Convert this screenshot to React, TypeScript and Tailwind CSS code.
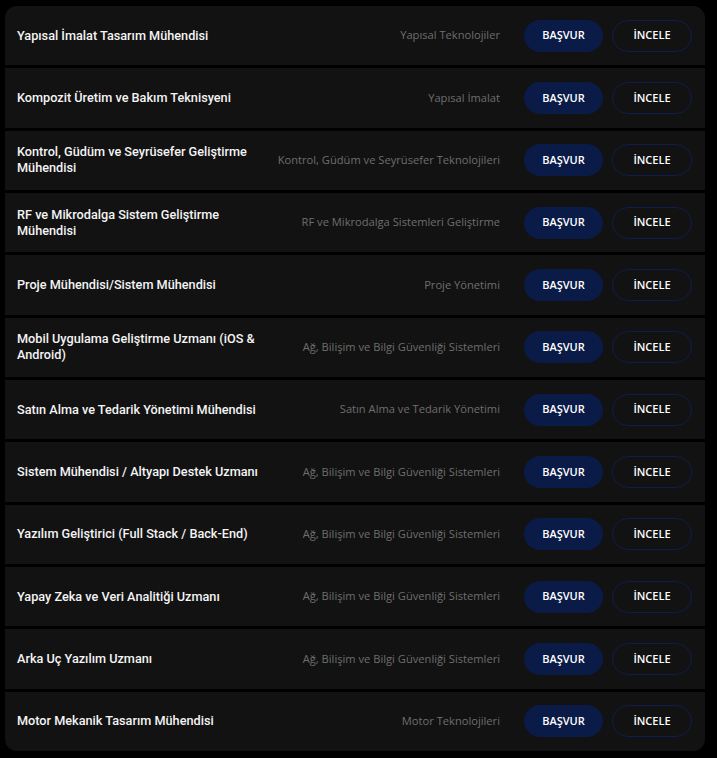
import React from "react";

const rows: [string, string][] = [
  ["Yapısal İmalat Tasarım Mühendisi", "Yapısal Teknolojiler"],
  ["Kompozit Üretim ve Bakım Teknisyeni", "Yapısal İmalat"],
  ["Kontrol, Güdüm ve Seyrüsefer Geliştirme Mühendisi", "Kontrol, Güdüm ve Seyrüsefer Teknolojileri"],
  ["RF ve Mikrodalga Sistem Geliştirme Mühendisi", "RF ve Mikrodalga Sistemleri Geliştirme"],
  ["Proje Mühendisi/Sistem Mühendisi", "Proje Yönetimi"],
  ["Mobil Uygulama Geliştirme Uzmanı (iOS & Android)", "Ağ, Bilişim ve Bilgi Güvenliği Sistemleri"],
  ["Satın Alma ve Tedarik Yönetimi Mühendisi", "Satın Alma ve Tedarik Yönetimi"],
  ["Sistem Mühendisi / Altyapı Destek Uzmanı", "Ağ, Bilişim ve Bilgi Güvenliği Sistemleri"],
  ["Yazılım Geliştirici (Full Stack / Back-End)", "Ağ, Bilişim ve Bilgi Güvenliği Sistemleri"],
  ["Yapay Zeka ve Veri Analitiği Uzmanı", "Ağ, Bilişim ve Bilgi Güvenliği Sistemleri"],
  ["Arka Uç Yazılım Uzmanı", "Ağ, Bilişim ve Bilgi Güvenliği Sistemleri"],
  ["Motor Mekanik Tasarım Mühendisi", "Motor Teknolojileri"],
];

export default function App() {
  return (
    <div className="min-h-[758px] w-full bg-black pt-[6px] pl-[5px] pr-[12px]">
      <div className="flex w-[700px] flex-col gap-[3px] overflow-hidden rounded-[12px]">
        {rows.map(([title, cat], i) => (
          <div
            key={i}
            className="flex h-[59.33px] items-center bg-[#121212] pl-[12px] pr-[13px]"
          >
            <div className="w-[246px] shrink-0 text-[12.7px] leading-[16px] font-medium text-[#f4f4f4] [font-family:Roboto,'Noto_Sans',sans-serif]">
              {title}
            </div>
            <div className="flex-1 pr-[24px] text-right text-[11.15px] text-[#6e6e6e] [font-family:'Open_Sans',sans-serif]">
              {cat}
            </div>
            <button className="flex h-[32px] w-[79px] items-center justify-center rounded-full bg-[#0a1b47] text-[11px] font-semibold text-white [font-family:'Open_Sans',sans-serif]">
              BAŞVUR
            </button>
            <button className="ml-[9px] flex h-[32px] w-[80px] items-center justify-center rounded-full border border-[#0e1d4b] bg-transparent text-[11px] font-semibold text-white [font-family:'Open_Sans',sans-serif]">
              İNCELE
            </button>
          </div>
        ))}
      </div>
    </div>
  );
}
